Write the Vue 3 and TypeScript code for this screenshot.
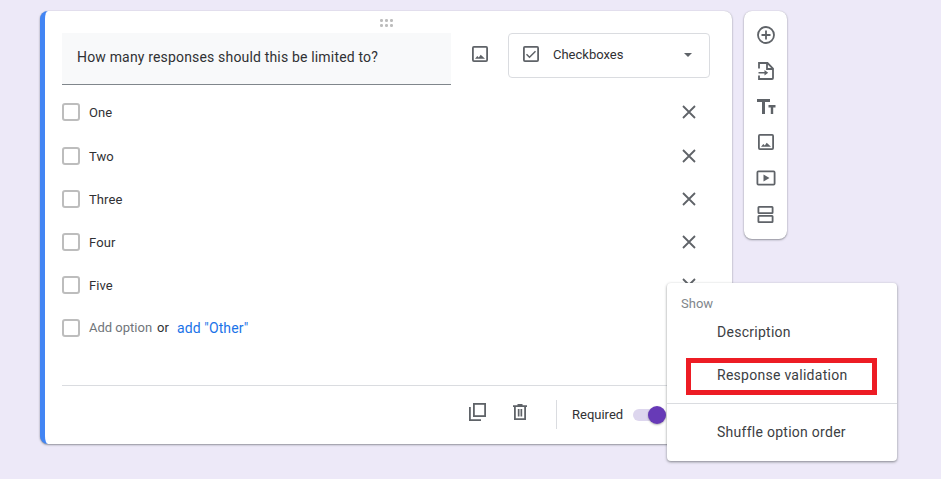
<script setup lang="ts">
const options: string[] = ['One', 'Two', 'Three', 'Four', 'Five']
</script>

<template>
  <div class="page">
    <section class="card">
      <div class="drag">
        <svg width="16" height="8" viewBox="0 0 16 8"><g fill="#bdbdbd"><rect x="1" y="0" width="3" height="3" rx="1.2"/><rect x="6" y="0" width="3" height="3" rx="1.2"/><rect x="11" y="0" width="3" height="3" rx="1.2"/><rect x="1" y="5" width="3" height="3" rx="1.2"/><rect x="6" y="5" width="3" height="3" rx="1.2"/><rect x="11" y="5" width="3" height="3" rx="1.2"/></g></svg>
      </div>
      <div class="head">
        <div class="question">How many responses should this be limited to?</div>
        <svg class="head-img" width="24" height="24" viewBox="0 0 24 24"><rect x="4.900" y="4.900" width="14.200" height="14.200" rx="1" fill="none" stroke="#5f6368" stroke-width="1.800"/><path fill="#5f6368" d="M7 16.800l2.300-2.800 1.500 1.500 1.900-2.700 4.300 4z"/></svg>
        <div class="select">
          <svg width="24" height="24" viewBox="0 0 24 24"><rect x="4.900" y="4.900" width="14.200" height="14.200" rx="1" fill="none" stroke="#5f6368" stroke-width="1.800"/><path fill="none" stroke="#5f6368" stroke-width="1.500" d="M7.500 12.200l3 3 6-6"/></svg>
          <span class="select-text">Checkboxes</span>
          <span class="caret"></span>
        </div>
      </div>

      <ul class="options">
        <li v-for="o in options" :key="o" class="option">
          <span class="box"></span>
          <span class="label opt">{{ o }}</span>
          <svg class="close" width="24" height="24" viewBox="0 0 24 24"><path stroke="#5f6368" stroke-width="1.800" fill="none" d="M6 6l12 12M18 6L6 18"/></svg>
        </li>
        <li class="option">
          <span class="box"></span>
          <span class="label add">Add option</span>
          <span class="label or">or</span>
          <span class="label other">add "Other"</span>
        </li>
      </ul>

      <footer class="footer">
        <svg class="foot-icon" width="24" height="24" viewBox="0 0 24 24"><rect x="8.900" y="3.900" width="11.200" height="12.200" fill="none" stroke="#5f6368" stroke-width="1.800"/><path fill="none" stroke="#5f6368" stroke-width="1.800" d="M4.900 7v13.100H16"/></svg>
        <svg class="foot-icon trash" width="24" height="24" viewBox="0 0 24 24"><path fill="#5f6368" d="M9.500 4h5v1.200H19V7H5V5.200h4.500z"/><path fill="none" stroke="#5f6368" stroke-width="1.800" d="M6.900 6.500v12.600h10.200V6.500"/><path fill="#5f6368" d="M9.800 9h1.700v7.500H9.800zM12.500 9h1.700v7.500h-1.700z"/></svg>
        <span class="sep"></span>
        <span class="required">Required</span>
        <span class="toggle"><span class="thumb"></span></span>
      </footer>
    </section>

    <aside class="tools">
      <svg width="24" height="24" viewBox="0 0 24 24"><circle cx="12" cy="12" r="8" fill="none" stroke="#5f6368" stroke-width="1.800"/><path stroke="#5f6368" stroke-width="1.800" d="M12 7.500v9M7.500 12h9"/></svg>
      <svg width="24" height="24" viewBox="0 0 24 24"><path fill="none" stroke="#5f6368" stroke-width="1.800" d="M5 9.500V4h8.500L19 9.500V19a1 1 0 0 1-1 1H5v-3.500M13 4v6h6"/><path fill="#5f6368" d="M10.500 11l3.700 2.800-3.700 2.800v-2H4.500V13h6z"/></svg>
      <svg width="24" height="24" viewBox="0 0 24 24"><path fill="#5f6368" d="M3 4v3h5v12h3V7h5V4zM14.500 10v2.400h2.300V19h2.400v-6.600h2.300V10z"/></svg>
      <svg width="24" height="24" viewBox="0 0 24 24"><rect x="4.900" y="4.900" width="14.200" height="14.200" rx="1" fill="none" stroke="#5f6368" stroke-width="1.800"/><path fill="#5f6368" d="M7 16.800l2.300-2.800 1.500 1.500 1.900-2.700 4.300 4z"/></svg>
      <svg width="24" height="24" viewBox="0 0 24 24"><rect x="3.400" y="5.400" width="17.200" height="13.200" rx="1" fill="none" stroke="#5f6368" stroke-width="1.800"/><path fill="#5f6368" d="M9.500 8.500l6 3.500-6 3.500z"/></svg>
      <svg width="24" height="24" viewBox="0 0 24 24"><rect x="4.400" y="4.900" width="14.200" height="6.200" fill="none" stroke="#5f6368" stroke-width="1.800" rx=".6"/><rect x="4.400" y="13.900" width="14.200" height="6.200" fill="none" stroke="#5f6368" stroke-width="1.800" rx=".6"/></svg>
    </aside>

    <div class="menu">
      <div class="menu-title">Show</div>
      <div class="menu-item desc">Description</div>
      <div class="menu-item resp">Response validation</div>
      <div class="menu-rule"></div>
      <div class="menu-item shuffle">Shuffle option order</div>
    </div>
  </div>
</template>

<style>
html, body { margin: 0; background: #ede9f8; }
</style>

<style scoped>
.page {
  position: relative;
  display: flex;
  align-items: flex-start;
  gap: 12px;
  width: 941px;
  height: 479px;
  box-sizing: border-box;
  padding: 11px 0 0 40px;
  overflow: hidden;
  background: #ede9f8;
  font-family: Roboto, sans-serif;
  color: #303134;
}
.card {
  width: 692px;
  height: 433px;
  box-sizing: border-box;
  padding: 0 22px 0 17px;
  background: #fff;
  border-left: 5px solid #4285f4;
  border-radius: 8px;
  box-shadow: 0 1px 2px rgba(60, 64, 67, .5), 0 0 1px rgba(60, 64, 67, .25);
  display: flex;
  flex-direction: column;
}
.drag { height: 22px; display: flex; justify-content: center; align-items: flex-start; padding-top: 8px; box-sizing: border-box; margin-left: 1px; }
.drag svg { display: block; }
.head { display: flex; align-items: flex-start; }
.question {
  width: 389px;
  height: 52px;
  flex: none;
  box-sizing: border-box;
  padding: 15px 15px 0;
  background: #f8f9fa;
  border-bottom: 1px solid #80868b;
  font-size: 14px;
  letter-spacing: .17px;
  line-height: 18px;
}
.head-img { margin: 9px 0 0 17px; flex: none; }
.select {
  margin-left: 16px;
  width: 202px;
  height: 45px;
  box-sizing: border-box;
  border: 1px solid #dadce0;
  border-radius: 4px;
  display: flex;
  align-items: center;
  padding-left: 10px;
  padding-right: 17px;
}
.select svg { margin-bottom: 3px; flex: none; }
.select-text { margin-left: 10px; font-size: 13px; flex: 1; margin-bottom: 1px; }
.caret { border-left: 4px solid transparent; border-right: 4px solid transparent; border-top: 4px solid #5f6368; }
.options { list-style: none; margin: 6px 0 0; padding: 0; }
.option { height: 43.2px; display: flex; align-items: center; }
.box {
  width: 18px; height: 18px; box-sizing: border-box;
  border: 2px solid #bdbdbd; border-radius: 3px; flex: none;
  margin-right: 9px;
}
.label { font-size: 13px; line-height: 18px; }
.opt { padding-top: 2px; letter-spacing: .1px; }
.add { color: #70757a; }
.or { margin-left: 5px; }
.other { margin-left: 8px; color: #1a73e8; font-size: 14px; letter-spacing: .12px; }
.close { margin-left: auto; margin-right: 9px; }
.footer {
  margin-top: 35px;
  height: 59px;
  border-top: 1px solid #dadce0;
  display: flex;
  align-items: center;
  padding-left: 403px;
}
.foot-icon { margin-bottom: 6px; flex: none; }
.trash { margin-left: 19px; }
.sep { width: 1px; height: 29px; background: #dadce0; margin-left: 24px; }
.required { font-size: 13px; margin-left: 15px; }
.toggle {
  margin-left: 10px; width: 33px; height: 12px; border-radius: 6px;
  background: #ddd6ee; position: relative; flex: none;
}
.thumb {
  position: absolute; right: 0; top: -3px; width: 18px; height: 18px;
  border-radius: 50%; background: #673ab7;
  box-shadow: 0 1px 2px rgba(0, 0, 0, .3);
}
.tools {
  width: 43px;
  height: 228px;
  box-sizing: border-box;
  padding: 12px 0;
  background: #fff;
  border-radius: 8px;
  box-shadow: 0 1px 2px rgba(60, 64, 67, .5), 0 0 1px rgba(60, 64, 67, .25);
  display: flex;
  flex-direction: column;
  align-items: center;
  gap: 11.8px;
}
.tools svg { display: block; flex: none; }
.menu {
  position: absolute;
  left: 667px;
  top: 283px;
  width: 230px;
  height: 178px;
  box-sizing: border-box;
  background: #fff;
  border-radius: 4px;
  box-shadow: 0 1px 3px rgba(60, 64, 67, .45), 0 1px 2px rgba(60, 64, 67, .2);
  padding-top: 13px;
}
.menu-title { font-size: 13px; line-height: 16px; color: #80868b; padding-left: 14px; }
.menu-item { font-size: 14px; line-height: 20px; color: #3c4043; padding-left: 50px; letter-spacing: .27px; }
.desc { margin-top: 10px; }
.resp { margin: 16px 0 0 19px; width: 191px; height: 37px; box-sizing: border-box; border: 5px solid #ed1c24; padding: 3px 0 0 26px; line-height: 19px; white-space: nowrap; }
.menu-rule { height: 1px; background: #dadce0; margin-top: 8px; }
.shuffle { margin-top: 18px; }
</style>
